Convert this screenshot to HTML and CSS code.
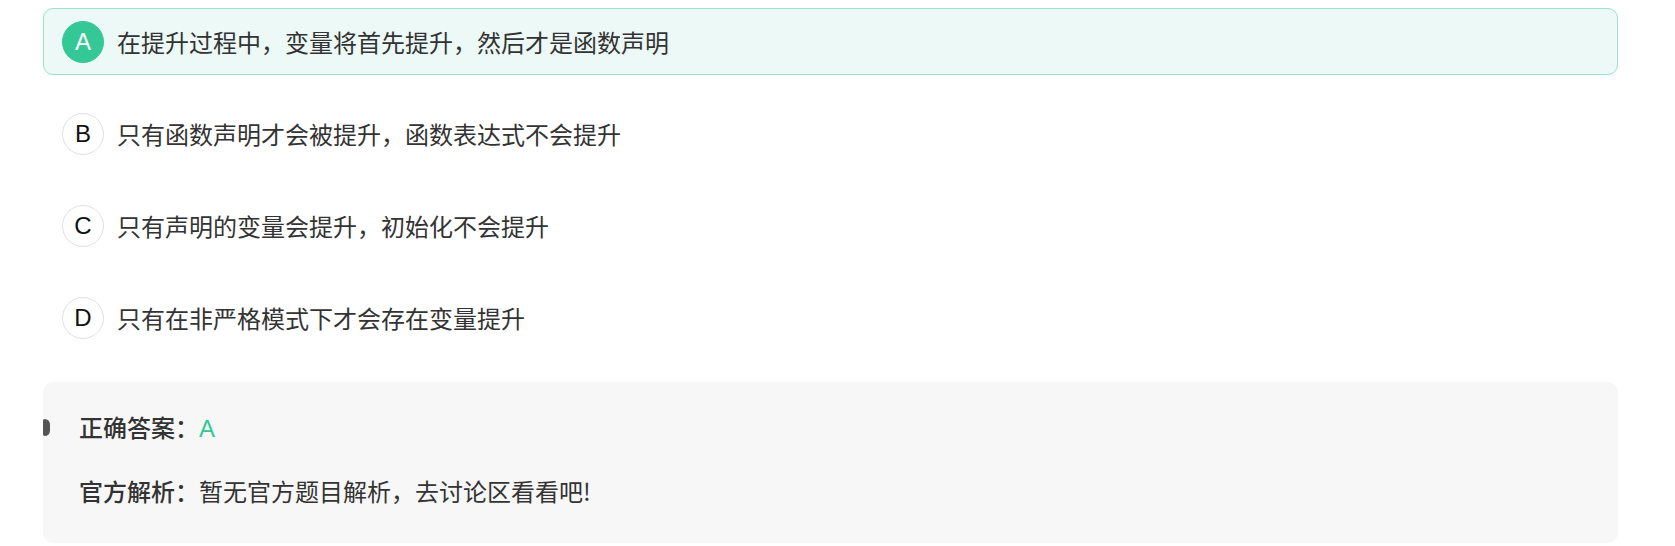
FILE: index.html
```html
<!DOCTYPE html>
<html lang="zh-CN">
<head>
<meta charset="utf-8">
<title>题目</title>
<link rel="stylesheet" href="styles.css">
</head>
<body>
<div class="page">
  <ul class="options">
    <li class="option selected"><span class="letter">A</span><span class="text">在提升过程中，变量将首先提升，然后才是函数声明</span></li>
    <li class="option"><span class="letter">B</span><span class="text">只有函数声明才会被提升，函数表达式不会提升</span></li>
    <li class="option"><span class="letter">C</span><span class="text">只有声明的变量会提升，初始化不会提升</span></li>
    <li class="option"><span class="letter">D</span><span class="text">只有在非严格模式下才会存在变量提升</span></li>
  </ul>
  <div class="analysis">
    <span class="marker"></span>
    <p class="line"><span class="label">正确答案：</span><span class="answer">A</span></p>
    <p class="line"><span class="label">官方解析：</span><span>暂无官方题目解析，去讨论区看看吧!</span></p>
  </div>
</div>
</body>
</html>
```
FILE: styles.css
```css
* { box-sizing: border-box; }
html, body { margin: 0; padding: 0; background: #fff; }
body {
  font-family: "Noto Sans CJK SC", "Liberation Sans", sans-serif;
  color: #333;
}
.page {
  width: 1575px;
  margin-left: 43px;
  padding-top: 8px;
}
.options {
  list-style: none;
  margin: 0;
  padding: 0;
  display: flex;
  flex-direction: column;
  gap: 25px;
}
.option {
  height: 67px;
  display: flex;
  align-items: center;
  padding-left: 18px;
  border: 1px solid transparent;
  border-radius: 10px;
}
.option.selected {
  background: #ecf9f6;
  border-color: #97e4c9;
}
.letter {
  width: 42px;
  height: 42px;
  border-radius: 50%;
  border: 1px solid #e0e0e0;
  background: #fff;
  display: flex;
  align-items: center;
  justify-content: center;
  font-family: "Liberation Sans", Arial, sans-serif;
  font-size: 24px;
  color: #111;
  flex: none;
}
.selected .letter {
  background: #33c896;
  border-color: #33c896;
  color: #fff;
}
.text {
  margin-left: 13px;
  font-size: 24px;
  color: #333;
  line-height: 1;
}
.analysis {
  position: relative;
  margin-top: 31px;
  height: 161px;
  background: #f7f7f7;
  border-radius: 10px;
  padding: 31px 36px 0;
}
.marker {
  position: absolute;
  left: 0;
  top: 37px;
  width: 7px;
  height: 17px;
  background: #555;
  border-radius: 2px 6px 6px 2px;
}
.line {
  margin: 0;
  font-size: 24px;
  line-height: 28px;
  color: #333;
}
.line + .line { margin-top: 34px; }
.label { font-weight: 500; }
.answer {
  color: #33c896;
  font-family: "Liberation Sans", Arial, sans-serif;
  font-size: 24px;
}
```
